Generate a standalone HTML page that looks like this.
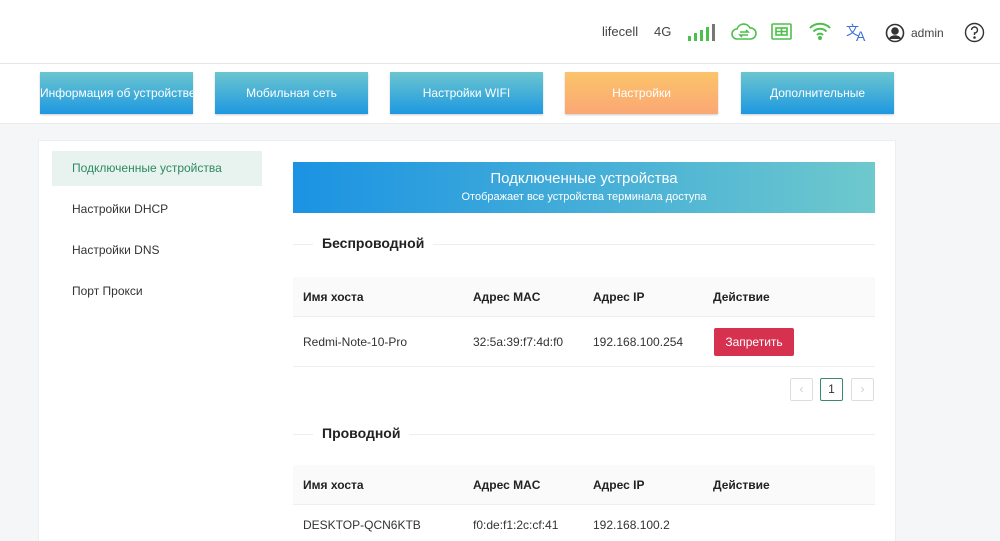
<!DOCTYPE html>
<html style="overflow:hidden;height:541px"><head><meta charset="utf-8"><style>
*{box-sizing:border-box;margin:0;padding:0}
body{width:1000px;height:541px;overflow:hidden;background:#f5f6f8;font-family:"Liberation Sans",sans-serif;color:#333;position:relative}
.hdr{position:absolute;left:0;top:0;width:1000px;height:64px;background:#fff;border-bottom:1px solid #e6e6e6}
.nav{position:absolute;left:0;top:64px;width:1000px;height:60px;background:#fff;border-bottom:1px solid #eaeaea}
.btn{position:absolute;top:8px;width:153px;height:42px;color:#fff;font-size:12px;line-height:42px;text-align:center;white-space:nowrap;overflow:hidden;background:linear-gradient(#6cc6cf,#1e98e0);box-shadow:0 1px 2px rgba(0,0,0,.2)}
.btn.o{background:linear-gradient(#fbc46a,#fba774)}
.t{position:absolute;font-size:13px;color:#444}
.card{position:absolute;left:38px;top:140px;width:858px;height:401px;background:#fff;border:1px solid #eee;border-bottom:none}
.side{position:absolute;left:13px;width:210px;height:35px;line-height:35px;padding-left:20px;font-size:12px;color:#333}
.banner{position:absolute;left:254px;top:21px;width:582px;height:51px;background:linear-gradient(90deg,#1b93e3,#6ec9cd);color:#fff;text-align:center}
.sec{position:absolute;left:254px;width:582px;height:1px;background:#eee}
.sec span{position:absolute;left:20px;top:-9px;background:#fff;padding:0 9px;font-size:14px;font-weight:bold;color:#222}
.th{position:absolute;left:254px;width:582px;height:40px;background:#fafafa;border-bottom:1px solid #eee}
.tr{position:absolute;left:254px;width:582px;height:50px;border-bottom:1px solid #eee}
.c{position:absolute;font-size:12px;top:0}
.th .c{line-height:40px;font-weight:bold;color:#222}
.tr .c{line-height:50px;color:#333}
.pg{position:absolute;top:237px;width:23px;height:23px;border:1px solid #ddd;border-radius:2px;font-size:12px;text-align:center;line-height:21px;color:#ccc}
</style></head><body>
<div class="hdr">
<span class="t" style="left:602px;top:24px">lifecell</span>
<span class="t" style="left:654px;top:24px">4G</span>
<svg style="position:absolute;left:688px;top:22px" width="30" height="20"><rect x="0" y="14" width="3" height="5" fill="#4cc04a"/><rect x="6" y="11" width="3" height="8" fill="#4cc04a"/><rect x="12" y="8" width="3" height="11" fill="#4cc04a"/><rect x="18" y="5" width="3" height="14" fill="#4cc04a"/><rect x="24" y="2" width="3" height="17" fill="#777"/></svg>
<svg style="position:absolute;left:731px;top:20px" width="26" height="24" fill="none" stroke="#4cc04a" stroke-width="1.6"><path d="M6 19a5 5 0 0 1 0-10a7 7 0 0 1 13-1a5 5 0 0 1 1 11z"/><path d="M9 12h8l-2-2M17 15H9l2 2"/></svg>
<svg style="position:absolute;left:771px;top:22px" width="22" height="20" fill="none" stroke="#4cc04a" stroke-width="1.6"><rect x="1" y="2" width="19" height="15" rx="1"/><rect x="5" y="6" width="11" height="7"/><path d="M10.5 6v7M5 9.5h11"/></svg>
<svg style="position:absolute;left:808px;top:21px" width="24" height="20" fill="none" stroke="#4cc04a" stroke-width="2"><path d="M2 7a14 14 0 0 1 20 0M5.5 10.5a9 9 0 0 1 13 0M9 14a4 4 0 0 1 6 0"/><circle cx="12" cy="17" r="1" fill="#4cc04a"/></svg>
<span style="position:absolute;left:846px;top:20px;color:#3a6fd8;font-size:13px">文</span><span style="position:absolute;left:856px;top:28px;color:#3a6fd8;font-size:14px">A</span>
<svg style="position:absolute;left:885px;top:23px" width="20" height="20" fill="none" stroke="#333" stroke-width="1.6"><circle cx="10" cy="10" r="8.5"/><circle cx="10" cy="8" r="3" fill="#333"/><path d="M4.5 16a6 5 0 0 1 11 0" fill="#333"/></svg>
<span class="t" style="left:911px;top:26px;font-size:12px">admin</span>
<svg style="position:absolute;left:964px;top:22px" width="21" height="21" fill="none" stroke="#333" stroke-width="1.4"><circle cx="10.5" cy="10.5" r="9"/><path d="M7.5 8a3 3 0 1 1 3 3v2"/><circle cx="10.5" cy="15.5" r=".6" fill="#333"/></svg>
</div>
<div class="nav">
<div class="btn" style="left:40px">Информация об устройстве</div>
<div class="btn" style="left:215px">Мобильная сеть</div>
<div class="btn" style="left:390px">Настройки WIFI</div>
<div class="btn o" style="left:565px">Настройки</div>
<div class="btn" style="left:741px">Дополнительные</div>
</div>
<div class="card">
<div class="side" style="top:10px;background:#e8f2ee;color:#2d8a63">Подключенные устройства</div>
<div class="side" style="top:51px">Настройки DHCP</div>
<div class="side" style="top:92px">Настройки DNS</div>
<div class="side" style="top:133px">Порт Прокси</div>
<div class="banner"><div style="font-size:15px;margin-top:8px">Подключенные устройства</div><div style="font-size:11px;margin-top:4px">Отображает все устройства терминала доступа</div></div>
<div class="sec" style="top:103px"><span>Беспроводной</span></div>
<div class="th" style="top:136px"><span class="c" style="left:10px">Имя хоста</span><span class="c" style="left:180px">Адрес MAC</span><span class="c" style="left:300px">Адрес IP</span><span class="c" style="left:420px">Действие</span></div>
<div class="tr" style="top:176px"><span class="c" style="left:10px">Redmi-Note-10-Pro</span><span class="c" style="left:180px">32:5a:39:f7:4d:f0</span><span class="c" style="left:300px">192.168.100.254</span><span style="position:absolute;left:421px;top:11px;width:80px;height:28px;background:#d6314f;border-radius:2px;color:#fff;font-size:12px;line-height:28px;text-align:center">Запретить</span></div>
<div class="pg" style="left:751px">&lsaquo;</div>
<div class="pg" style="left:781px;border-color:#3a8a6a;color:#333">1</div>
<div class="pg" style="left:812px">&rsaquo;</div>
<div class="sec" style="top:293px"><span>Проводной</span></div>
<div class="th" style="top:324px"><span class="c" style="left:10px">Имя хоста</span><span class="c" style="left:180px">Адрес MAC</span><span class="c" style="left:300px">Адрес IP</span><span class="c" style="left:420px">Действие</span></div>
<div class="tr" style="top:364px;height:40px"><span class="c" style="left:10px;line-height:40px">DESKTOP-QCN6KTB</span><span class="c" style="left:180px;line-height:40px">f0:de:f1:2c:cf:41</span><span class="c" style="left:300px;line-height:40px">192.168.100.2</span></div>
</div>
</body></html>
